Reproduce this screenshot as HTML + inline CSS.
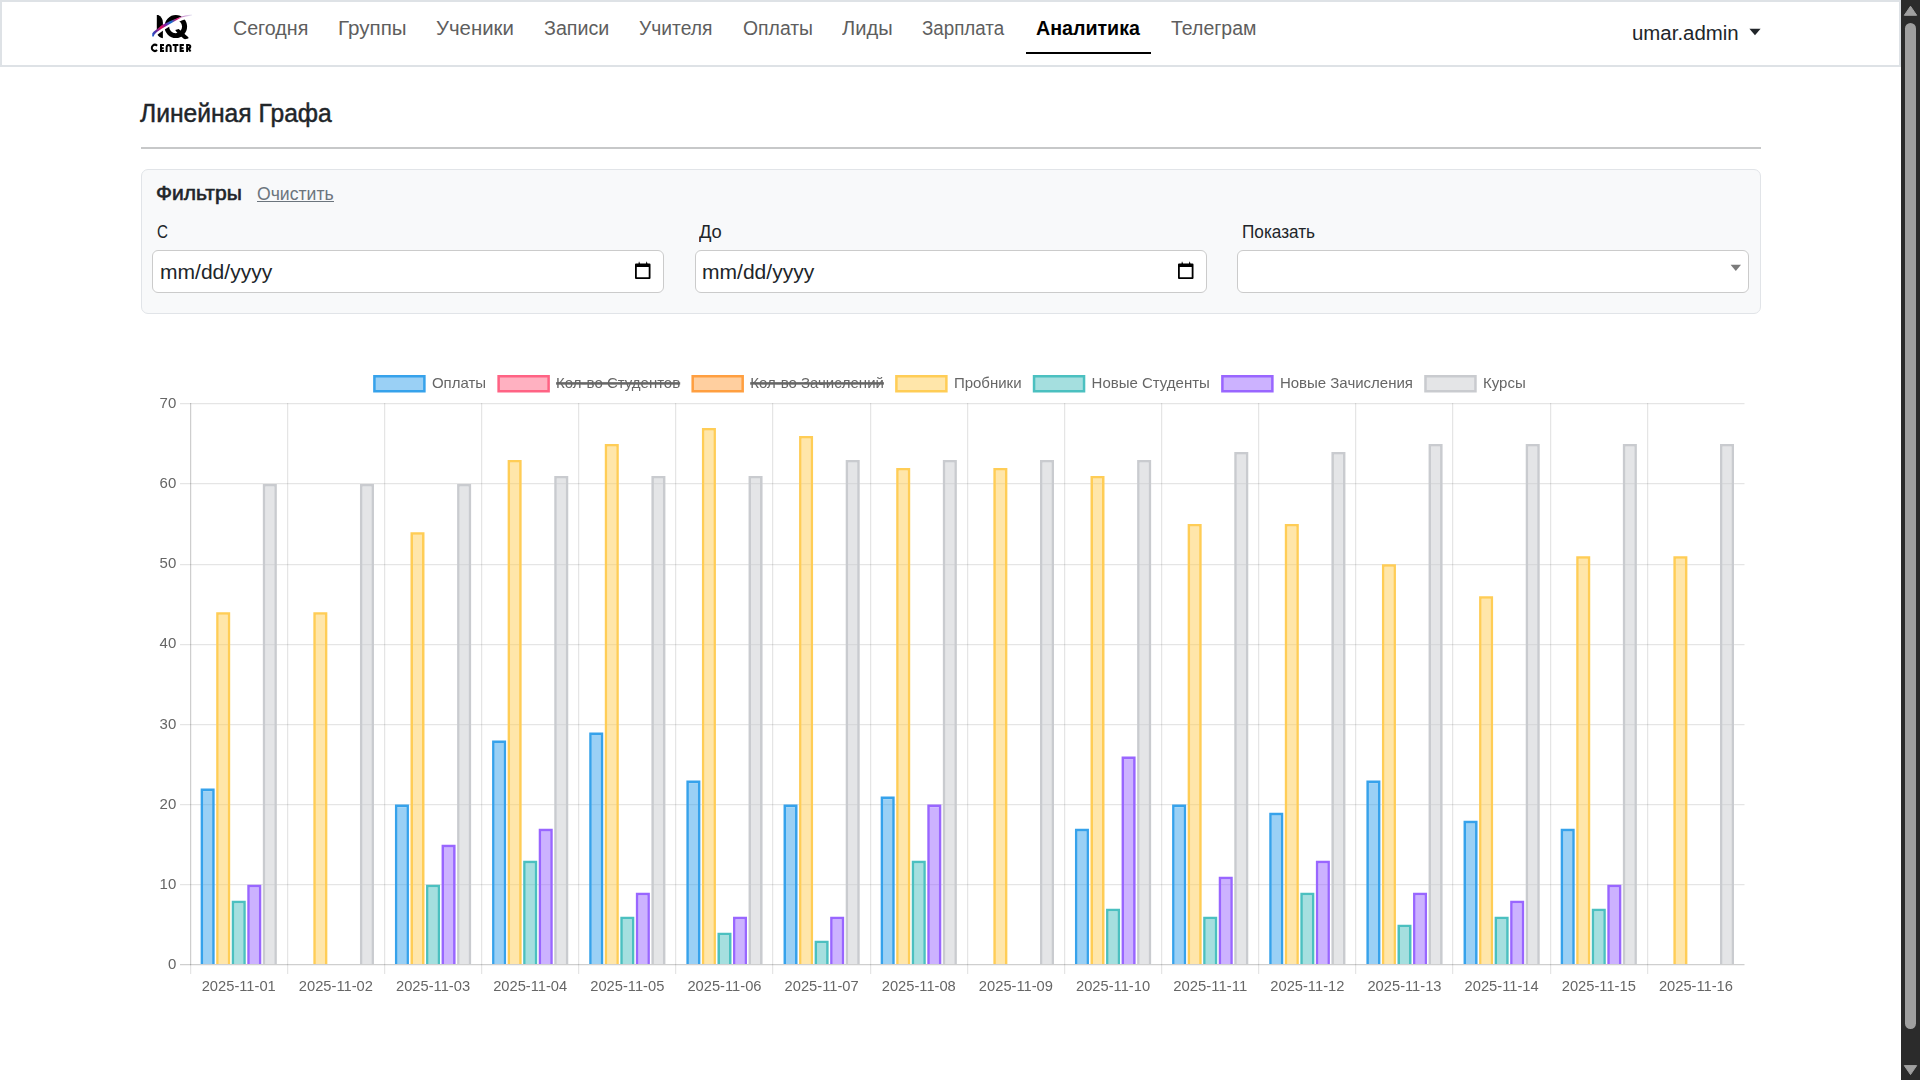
<!DOCTYPE html><html><head><meta charset="utf-8"><title>Аналитика</title><style>
*{box-sizing:border-box;margin:0;padding:0}
html,body{width:1920px;height:1080px;overflow:hidden;background:#fff}
body{position:relative;font-family:"Liberation Sans",sans-serif;color:#212529}
.a{position:absolute;white-space:nowrap}
.nav{position:absolute;left:0;top:0;width:1901px;height:67px;border:2px solid #dee2e6;background:#fff}
.nl{position:absolute;font-size:20px;line-height:20px;color:#5c5c5c;transform-origin:0 0}
.sb{position:absolute;left:1901px;top:0;width:19px;height:1080px;background:#2b2b2b}
.card{position:absolute;left:141px;top:169px;width:1620px;height:145px;background:#f8f9fa;border:1px solid #e1e4e8;border-radius:7px}
.inp{position:absolute;top:250px;height:43px;background:#fff;border:1px solid #cbcbcb;border-radius:6px}
</style></head><body>
<div class="nav"></div>
<svg class="a" style="left:144px;top:10px" width="56" height="48" viewBox="144 10 56 48">
<defs><linearGradient id="sw" x1="152" y1="36" x2="192" y2="15" gradientUnits="userSpaceOnUse">
<stop offset="0" stop-color="#1a5fd0"/><stop offset="0.13" stop-color="#5a2aa0"/><stop offset="0.27" stop-color="#e2105a"/>
<stop offset="0.38" stop-color="#7a20a8"/><stop offset="0.52" stop-color="#1070d0"/><stop offset="0.66" stop-color="#e01070"/>
<stop offset="0.8" stop-color="#c890d0"/><stop offset="1" stop-color="#e8e8f4"/></linearGradient></defs>
<path d="M156.8 15 L158.3 15 C161 16.5 162.9 19 162.9 22.5 L162.9 38.3 C160.5 37.8 158.3 36.5 157.2 34.2 L156.8 33 Z" fill="#000"/>
<path fill-rule="evenodd" fill="#000" d="M164.5 26.6 A11.3 11.5 0 1 1 187.1 26.6 A11.3 11.5 0 1 1 164.5 26.6 Z M169.1 26.6 A6.5 6.65 0 1 0 182.1 26.6 A6.5 6.65 0 1 0 169.1 26.6 Z"/>
<path fill="#000" d="M175.2 30.0 L178.7 28.9 L188.4 37.2 Q188.6 38.3 188.1 38.6 L185 39.3 Q183.3 38.8 182 37.3 L177.2 32.8 Z"/>
<path d="M153.2 36.2 C158 31.6 167 25.4 175.9 21.1 C179.5 19.3 183 17.9 188 16.6" fill="none" stroke="#fff" stroke-width="3.4"/>
<path fill="url(#sw)" d="M152.3 33.2 L153.8 31.6 L156.9 29.2 L162 25.05 L170.3 20.9 L175.9 18.7 L181.4 16.4 L186 15.3 L192 14.5 L192 15.4 L186 16.5 L181.4 17.6 L175.9 20.6 L170.3 23.7 L162 28.4 L156.9 32.0 L154.5 34.6 L153.6 36.4 L152.8 36.8 L152.2 36.0 Z"/>
<path fill="none" stroke="#000" stroke-width="2" d="M157.1 45.74 A3.1 3.05 0 1 0 157.1 50.06 M164.05 44.95 H161 V51 H164.05 M161 48.25 H163.7 M166.6 52 V47.5 A2.05 2.55 0 0 1 170.7 47.5 V52 M172.7 44.95 H178.4 M175.55 44.95 V52 M183.9 44.95 H180.6 V51 H183.9 M180.6 48.25 H183.5 M187.1 52 V44.95 H188.4 A1.9 1.75 0 0 1 188.4 48.45 H187.1 M188.6 48.4 L190.5 51.6"/>
</svg>
<div class="a" style="left:232.52px;top:18.07px;font-size:20px;line-height:20px;height:20px;color:#5e5e5e;transform:scaleX(0.9824);transform-origin:0 0;">Сегодня</div>
<div class="a" style="left:337.72px;top:18.07px;font-size:20px;line-height:20px;height:20px;color:#5e5e5e;transform:scaleX(1.0293);transform-origin:0 0;">Группы</div>
<div class="a" style="left:436.40px;top:18.07px;font-size:20px;line-height:20px;height:20px;color:#5e5e5e;transform:scaleX(1.0184);transform-origin:0 0;">Ученики</div>
<div class="a" style="left:544.20px;top:18.07px;font-size:20px;line-height:20px;height:20px;color:#5e5e5e;transform:scaleX(0.9831);transform-origin:0 0;">Записи</div>
<div class="a" style="left:638.75px;top:18.07px;font-size:20px;line-height:20px;height:20px;color:#5e5e5e;transform:scaleX(0.9640);transform-origin:0 0;">Учителя</div>
<div class="a" style="left:742.70px;top:18.07px;font-size:20px;line-height:20px;height:20px;color:#5e5e5e;transform:scaleX(0.9690);transform-origin:0 0;">Оплаты</div>
<div class="a" style="left:841.90px;top:18.07px;font-size:20px;line-height:20px;height:20px;color:#5e5e5e;transform:scaleX(1.0048);transform-origin:0 0;">Лиды</div>
<div class="a" style="left:922.30px;top:18.07px;font-size:20px;line-height:20px;height:20px;color:#5e5e5e;transform:scaleX(0.9373);transform-origin:0 0;">Зарплата</div>
<div class="a" style="left:1035.60px;top:18.07px;font-size:20px;line-height:20px;height:20px;color:#000;font-weight:bold;transform:scaleX(0.9818);transform-origin:0 0;">Аналитика</div>
<div class="a" style="left:1171.00px;top:18.07px;font-size:20px;line-height:20px;height:20px;color:#5e5e5e;transform:scaleX(0.9748);transform-origin:0 0;">Телеграм</div>
<div class="a" style="left:1026px;top:52px;width:125px;height:2px;background:#000"></div>
<div class="a" style="left:1631.98px;top:23.07px;font-size:20px;line-height:20px;height:20px;color:#212529;transform:scaleX(1.0208);transform-origin:0 0;">umar.admin</div>
<svg class="a" style="left:1749px;top:28px" width="12" height="8"><path d="M0.4 0.8 L11.6 0.8 L6 7.2 Z" fill="#212529"/></svg>
<div class="a" style="left:140.30px;top:100.74px;font-size:25px;line-height:25px;height:25px;color:#212529;transform:scaleX(0.9854);transform-origin:0 0;-webkit-text-stroke:0.45px #212529;">Линейная Графа</div>
<div class="a" style="left:141px;top:147px;width:1620px;height:2px;background:#c7c8c9"></div>
<div class="card"></div>
<div class="a" style="left:155.75px;top:182.87px;font-size:20px;line-height:20px;height:20px;color:#212529;transform:scaleX(1.0519);transform-origin:0 0;-webkit-text-stroke:0.6px #212529;">Фильтры</div>
<div class="a" style="left:256.80px;top:185.59px;font-size:17.5px;line-height:17.5px;height:17.5px;color:#6c757d;transform:scaleX(1.0058);transform-origin:0 0;">Очистить</div>
<div class="a" style="left:257px;top:201px;width:77px;height:1.3px;background:#6c757d"></div>
<div class="a" style="left:156.80px;top:223.89px;font-size:17.5px;line-height:17.5px;height:17.5px;color:#212529;transform:scaleX(0.8667);transform-origin:0 0;">С</div>
<div class="a" style="left:699.20px;top:223.89px;font-size:17.5px;line-height:17.5px;height:17.5px;color:#212529;transform:scaleX(1.0476);transform-origin:0 0;">До</div>
<div class="a" style="left:1241.52px;top:224.09px;font-size:17.5px;line-height:17.5px;height:17.5px;color:#212529;transform:scaleX(0.9812);transform-origin:0 0;">Показать</div>
<div class="inp" style="left:152px;width:512px"></div>
<div class="a" style="left:159.95px;top:262.07px;font-size:20px;line-height:20px;height:20px;color:#212529;transform:scaleX(1.0522);transform-origin:0 0;">mm/dd/yyyy</div>
<svg class="a" style="left:634px;top:260px" width="18" height="20" viewBox="0 0 18 20">
<path d="M1 4.5 Q1 3.5 2 3.5 L4.5 3.5 L5 1.2 L6 3.5 L12 3.5 L12.6 1.2 L13.5 3.5 L15.5 3.5 Q16.5 3.5 16.5 4.5 L16.5 18 Q16.5 19 15.5 19 L2 19 Q1 19 1 18 Z M2.8 7 L2.8 17.2 L14.7 17.2 L14.7 7 Z" fill="#000" fill-rule="evenodd"/></svg>
<div class="inp" style="left:694.5px;width:512.0px"></div>
<div class="a" style="left:702.45px;top:262.07px;font-size:20px;line-height:20px;height:20px;color:#212529;transform:scaleX(1.0522);transform-origin:0 0;">mm/dd/yyyy</div>
<svg class="a" style="left:1176.5px;top:260px" width="18" height="20" viewBox="0 0 18 20">
<path d="M1 4.5 Q1 3.5 2 3.5 L4.5 3.5 L5 1.2 L6 3.5 L12 3.5 L12.6 1.2 L13.5 3.5 L15.5 3.5 Q16.5 3.5 16.5 4.5 L16.5 18 Q16.5 19 15.5 19 L2 19 Q1 19 1 18 Z M2.8 7 L2.8 17.2 L14.7 17.2 L14.7 7 Z" fill="#000" fill-rule="evenodd"/></svg>
<div class="inp" style="left:1237px;width:512px"></div>
<svg class="a" style="left:1730px;top:264px" width="12" height="8"><path d="M0.6 0.7 L11 0.7 L5.8 7 Z" fill="#7b7b7b"/></svg>
<svg class="a" style="left:0;top:340px;will-change:transform" width="1900" height="700" viewBox="0 340 1900 700" font-family="Liberation Sans" font-size="15">
<text x="176.3" y="969.00" text-anchor="end" fill="#666" font-size="15.5" textLength="8.34" lengthAdjust="spacingAndGlyphs">0</text>
<rect x="180" y="884" width="1564.50" height="1.25" fill="rgba(0,0,0,0.1)"/>
<text x="176.3" y="888.86" text-anchor="end" fill="#666" font-size="15.5" textLength="16.68" lengthAdjust="spacingAndGlyphs">10</text>
<rect x="180" y="804" width="1564.50" height="1.25" fill="rgba(0,0,0,0.1)"/>
<text x="176.3" y="808.72" text-anchor="end" fill="#666" font-size="15.5" textLength="16.68" lengthAdjust="spacingAndGlyphs">20</text>
<rect x="180" y="724" width="1564.50" height="1.25" fill="rgba(0,0,0,0.1)"/>
<text x="176.3" y="728.57" text-anchor="end" fill="#666" font-size="15.5" textLength="16.68" lengthAdjust="spacingAndGlyphs">30</text>
<rect x="180" y="644" width="1564.50" height="1.25" fill="rgba(0,0,0,0.1)"/>
<text x="176.3" y="648.43" text-anchor="end" fill="#666" font-size="15.5" textLength="16.68" lengthAdjust="spacingAndGlyphs">40</text>
<rect x="180" y="564" width="1564.50" height="1.25" fill="rgba(0,0,0,0.1)"/>
<text x="176.3" y="568.29" text-anchor="end" fill="#666" font-size="15.5" textLength="16.68" lengthAdjust="spacingAndGlyphs">50</text>
<rect x="180" y="483" width="1564.50" height="1.25" fill="rgba(0,0,0,0.1)"/>
<text x="176.3" y="488.14" text-anchor="end" fill="#666" font-size="15.5" textLength="16.68" lengthAdjust="spacingAndGlyphs">60</text>
<rect x="180" y="403" width="1564.50" height="1.25" fill="rgba(0,0,0,0.1)"/>
<text x="176.3" y="408.00" text-anchor="end" fill="#666" font-size="15.5" textLength="16.68" lengthAdjust="spacingAndGlyphs">70</text>
<rect x="190" y="403" width="1.25" height="571" fill="rgba(0,0,0,0.1)"/>
<rect x="287" y="403" width="1.25" height="571" fill="rgba(0,0,0,0.1)"/>
<rect x="384" y="403" width="1.25" height="571" fill="rgba(0,0,0,0.1)"/>
<rect x="481" y="403" width="1.25" height="571" fill="rgba(0,0,0,0.1)"/>
<rect x="578" y="403" width="1.25" height="571" fill="rgba(0,0,0,0.1)"/>
<rect x="675" y="403" width="1.25" height="571" fill="rgba(0,0,0,0.1)"/>
<rect x="772" y="403" width="1.25" height="571" fill="rgba(0,0,0,0.1)"/>
<rect x="870" y="403" width="1.25" height="571" fill="rgba(0,0,0,0.1)"/>
<rect x="967" y="403" width="1.25" height="571" fill="rgba(0,0,0,0.1)"/>
<rect x="1064" y="403" width="1.25" height="571" fill="rgba(0,0,0,0.1)"/>
<rect x="1161" y="403" width="1.25" height="571" fill="rgba(0,0,0,0.1)"/>
<rect x="1258" y="403" width="1.25" height="571" fill="rgba(0,0,0,0.1)"/>
<rect x="1355" y="403" width="1.25" height="571" fill="rgba(0,0,0,0.1)"/>
<rect x="1452" y="403" width="1.25" height="571" fill="rgba(0,0,0,0.1)"/>
<rect x="1550" y="403" width="1.25" height="571" fill="rgba(0,0,0,0.1)"/>
<rect x="1647" y="403" width="1.25" height="571" fill="rgba(0,0,0,0.1)"/>
<rect x="190" y="403" width="1.25" height="562.25" fill="rgba(0,0,0,0.1)"/>
<text x="238.74" y="991" text-anchor="middle" fill="#666" font-size="15.5" textLength="74.1" lengthAdjust="spacingAndGlyphs">2025-11-01</text>
<text x="335.89" y="991" text-anchor="middle" fill="#666" font-size="15.5" textLength="74.1" lengthAdjust="spacingAndGlyphs">2025-11-02</text>
<text x="433.03" y="991" text-anchor="middle" fill="#666" font-size="15.5" textLength="74.1" lengthAdjust="spacingAndGlyphs">2025-11-03</text>
<text x="530.18" y="991" text-anchor="middle" fill="#666" font-size="15.5" textLength="74.1" lengthAdjust="spacingAndGlyphs">2025-11-04</text>
<text x="627.33" y="991" text-anchor="middle" fill="#666" font-size="15.5" textLength="74.1" lengthAdjust="spacingAndGlyphs">2025-11-05</text>
<text x="724.47" y="991" text-anchor="middle" fill="#666" font-size="15.5" textLength="74.1" lengthAdjust="spacingAndGlyphs">2025-11-06</text>
<text x="821.62" y="991" text-anchor="middle" fill="#666" font-size="15.5" textLength="74.1" lengthAdjust="spacingAndGlyphs">2025-11-07</text>
<text x="918.76" y="991" text-anchor="middle" fill="#666" font-size="15.5" textLength="74.1" lengthAdjust="spacingAndGlyphs">2025-11-08</text>
<text x="1015.91" y="991" text-anchor="middle" fill="#666" font-size="15.5" textLength="74.1" lengthAdjust="spacingAndGlyphs">2025-11-09</text>
<text x="1113.05" y="991" text-anchor="middle" fill="#666" font-size="15.5" textLength="74.1" lengthAdjust="spacingAndGlyphs">2025-11-10</text>
<text x="1210.20" y="991" text-anchor="middle" fill="#666" font-size="15.5" textLength="74.1" lengthAdjust="spacingAndGlyphs">2025-11-11</text>
<text x="1307.34" y="991" text-anchor="middle" fill="#666" font-size="15.5" textLength="74.1" lengthAdjust="spacingAndGlyphs">2025-11-12</text>
<text x="1404.49" y="991" text-anchor="middle" fill="#666" font-size="15.5" textLength="74.1" lengthAdjust="spacingAndGlyphs">2025-11-13</text>
<text x="1501.64" y="991" text-anchor="middle" fill="#666" font-size="15.5" textLength="74.1" lengthAdjust="spacingAndGlyphs">2025-11-14</text>
<text x="1598.78" y="991" text-anchor="middle" fill="#666" font-size="15.5" textLength="74.1" lengthAdjust="spacingAndGlyphs">2025-11-15</text>
<text x="1695.93" y="991" text-anchor="middle" fill="#666" font-size="15.5" textLength="74.1" lengthAdjust="spacingAndGlyphs">2025-11-16</text>
<path fill-rule="evenodd" fill="rgb(54,162,235)" d="M200.66 788.59H214.65V964.00H200.66Z M203.16 791.09V964.00H212.15V791.09Z"/>
<rect x="203.16" y="791.09" width="8.99" height="172.91" fill="rgba(54,162,235,0.5)"/>
<path fill-rule="evenodd" fill="rgb(255,205,86)" d="M216.21 612.27H230.19V964.00H216.21Z M218.71 614.77V964.00H227.69V614.77Z"/>
<rect x="218.71" y="614.77" width="8.99" height="349.23" fill="rgba(255,205,86,0.5)"/>
<path fill-rule="evenodd" fill="rgb(75,192,192)" d="M231.75 900.79H245.74V964.00H231.75Z M234.25 903.29V964.00H243.24V903.29Z"/>
<rect x="234.25" y="903.29" width="8.99" height="60.71" fill="rgba(75,192,192,0.5)"/>
<path fill-rule="evenodd" fill="rgb(153,102,255)" d="M247.29 884.76H261.28V964.00H247.29Z M249.79 887.26V964.00H258.78V887.26Z"/>
<rect x="249.79" y="887.26" width="8.99" height="76.74" fill="rgba(153,102,255,0.5)"/>
<path fill-rule="evenodd" fill="rgb(201,203,207)" d="M262.83 484.04H276.82V964.00H262.83Z M265.33 486.54V964.00H274.32V486.54Z"/>
<rect x="265.33" y="486.54" width="8.99" height="477.46" fill="rgba(201,203,207,0.5)"/>
<path fill-rule="evenodd" fill="rgb(255,205,86)" d="M313.35 612.27H327.34V964.00H313.35Z M315.85 614.77V964.00H324.84V614.77Z"/>
<rect x="315.85" y="614.77" width="8.99" height="349.23" fill="rgba(255,205,86,0.5)"/>
<path fill-rule="evenodd" fill="rgb(201,203,207)" d="M359.98 484.04H373.97V964.00H359.98Z M362.48 486.54V964.00H371.47V486.54Z"/>
<rect x="362.48" y="486.54" width="8.99" height="477.46" fill="rgba(201,203,207,0.5)"/>
<path fill-rule="evenodd" fill="rgb(54,162,235)" d="M394.95 804.62H408.94V964.00H394.95Z M397.45 807.12V964.00H406.44V807.12Z"/>
<rect x="397.45" y="807.12" width="8.99" height="156.88" fill="rgba(54,162,235,0.5)"/>
<path fill-rule="evenodd" fill="rgb(255,205,86)" d="M410.50 532.13H424.49V964.00H410.50Z M413.00 534.63V964.00H421.99V534.63Z"/>
<rect x="413.00" y="534.63" width="8.99" height="429.37" fill="rgba(255,205,86,0.5)"/>
<path fill-rule="evenodd" fill="rgb(75,192,192)" d="M426.04 884.76H440.03V964.00H426.04Z M428.54 887.26V964.00H437.53V887.26Z"/>
<rect x="428.54" y="887.26" width="8.99" height="76.74" fill="rgba(75,192,192,0.5)"/>
<path fill-rule="evenodd" fill="rgb(153,102,255)" d="M441.58 844.69H455.57V964.00H441.58Z M444.08 847.19V964.00H453.07V847.19Z"/>
<rect x="444.08" y="847.19" width="8.99" height="116.81" fill="rgba(153,102,255,0.5)"/>
<path fill-rule="evenodd" fill="rgb(201,203,207)" d="M457.13 484.04H471.12V964.00H457.13Z M459.63 486.54V964.00H468.62V486.54Z"/>
<rect x="459.63" y="486.54" width="8.99" height="477.46" fill="rgba(201,203,207,0.5)"/>
<path fill-rule="evenodd" fill="rgb(54,162,235)" d="M492.10 740.50H506.09V964.00H492.10Z M494.60 743.00V964.00H503.59V743.00Z"/>
<rect x="494.60" y="743.00" width="8.99" height="221.00" fill="rgba(54,162,235,0.5)"/>
<path fill-rule="evenodd" fill="rgb(255,205,86)" d="M507.64 460.00H521.63V964.00H507.64Z M510.14 462.50V964.00H519.13V462.50Z"/>
<rect x="510.14" y="462.50" width="8.99" height="501.50" fill="rgba(255,205,86,0.5)"/>
<path fill-rule="evenodd" fill="rgb(75,192,192)" d="M523.19 860.72H537.17V964.00H523.19Z M525.69 863.22V964.00H534.67V863.22Z"/>
<rect x="525.69" y="863.22" width="8.99" height="100.78" fill="rgba(75,192,192,0.5)"/>
<path fill-rule="evenodd" fill="rgb(153,102,255)" d="M538.73 828.66H552.72V964.00H538.73Z M541.23 831.16V964.00H550.22V831.16Z"/>
<rect x="541.23" y="831.16" width="8.99" height="132.84" fill="rgba(153,102,255,0.5)"/>
<path fill-rule="evenodd" fill="rgb(201,203,207)" d="M554.27 476.03H568.26V964.00H554.27Z M556.77 478.53V964.00H565.76V478.53Z"/>
<rect x="556.77" y="478.53" width="8.99" height="485.47" fill="rgba(201,203,207,0.5)"/>
<path fill-rule="evenodd" fill="rgb(54,162,235)" d="M589.24 732.49H603.23V964.00H589.24Z M591.74 734.99V964.00H600.73V734.99Z"/>
<rect x="591.74" y="734.99" width="8.99" height="229.01" fill="rgba(54,162,235,0.5)"/>
<path fill-rule="evenodd" fill="rgb(255,205,86)" d="M604.79 443.97H618.78V964.00H604.79Z M607.29 446.47V964.00H616.28V446.47Z"/>
<rect x="607.29" y="446.47" width="8.99" height="517.53" fill="rgba(255,205,86,0.5)"/>
<path fill-rule="evenodd" fill="rgb(75,192,192)" d="M620.33 916.82H634.32V964.00H620.33Z M622.83 919.32V964.00H631.82V919.32Z"/>
<rect x="622.83" y="919.32" width="8.99" height="44.68" fill="rgba(75,192,192,0.5)"/>
<path fill-rule="evenodd" fill="rgb(153,102,255)" d="M635.87 892.77H649.86V964.00H635.87Z M638.37 895.27V964.00H647.36V895.27Z"/>
<rect x="638.37" y="895.27" width="8.99" height="68.73" fill="rgba(153,102,255,0.5)"/>
<path fill-rule="evenodd" fill="rgb(201,203,207)" d="M651.42 476.03H665.41V964.00H651.42Z M653.92 478.53V964.00H662.91V478.53Z"/>
<rect x="653.92" y="478.53" width="8.99" height="485.47" fill="rgba(201,203,207,0.5)"/>
<path fill-rule="evenodd" fill="rgb(54,162,235)" d="M686.39 780.57H700.38V964.00H686.39Z M688.89 783.07V964.00H697.88V783.07Z"/>
<rect x="688.89" y="783.07" width="8.99" height="180.93" fill="rgba(54,162,235,0.5)"/>
<path fill-rule="evenodd" fill="rgb(255,205,86)" d="M701.93 427.94H715.92V964.00H701.93Z M704.43 430.44V964.00H713.42V430.44Z"/>
<rect x="704.43" y="430.44" width="8.99" height="533.56" fill="rgba(255,205,86,0.5)"/>
<path fill-rule="evenodd" fill="rgb(75,192,192)" d="M717.48 932.84H731.47V964.00H717.48Z M719.98 935.34V964.00H728.97V935.34Z"/>
<rect x="719.98" y="935.34" width="8.99" height="28.66" fill="rgba(75,192,192,0.5)"/>
<path fill-rule="evenodd" fill="rgb(153,102,255)" d="M733.02 916.82H747.01V964.00H733.02Z M735.52 919.32V964.00H744.51V919.32Z"/>
<rect x="735.52" y="919.32" width="8.99" height="44.68" fill="rgba(153,102,255,0.5)"/>
<path fill-rule="evenodd" fill="rgb(201,203,207)" d="M748.56 476.03H762.55V964.00H748.56Z M751.06 478.53V964.00H760.05V478.53Z"/>
<rect x="751.06" y="478.53" width="8.99" height="485.47" fill="rgba(201,203,207,0.5)"/>
<path fill-rule="evenodd" fill="rgb(54,162,235)" d="M783.54 804.62H797.52V964.00H783.54Z M786.04 807.12V964.00H795.02V807.12Z"/>
<rect x="786.04" y="807.12" width="8.99" height="156.88" fill="rgba(54,162,235,0.5)"/>
<path fill-rule="evenodd" fill="rgb(255,205,86)" d="M799.08 435.96H813.07V964.00H799.08Z M801.58 438.46V964.00H810.57V438.46Z"/>
<rect x="801.58" y="438.46" width="8.99" height="525.54" fill="rgba(255,205,86,0.5)"/>
<path fill-rule="evenodd" fill="rgb(75,192,192)" d="M814.62 940.86H828.61V964.00H814.62Z M817.12 943.36V964.00H826.11V943.36Z"/>
<rect x="817.12" y="943.36" width="8.99" height="20.64" fill="rgba(75,192,192,0.5)"/>
<path fill-rule="evenodd" fill="rgb(153,102,255)" d="M830.17 916.82H844.15V964.00H830.17Z M832.67 919.32V964.00H841.65V919.32Z"/>
<rect x="832.67" y="919.32" width="8.99" height="44.68" fill="rgba(153,102,255,0.5)"/>
<path fill-rule="evenodd" fill="rgb(201,203,207)" d="M845.71 460.00H859.70V964.00H845.71Z M848.21 462.50V964.00H857.20V462.50Z"/>
<rect x="848.21" y="462.50" width="8.99" height="501.50" fill="rgba(201,203,207,0.5)"/>
<path fill-rule="evenodd" fill="rgb(54,162,235)" d="M880.68 796.60H894.67V964.00H880.68Z M883.18 799.10V964.00H892.17V799.10Z"/>
<rect x="883.18" y="799.10" width="8.99" height="164.90" fill="rgba(54,162,235,0.5)"/>
<path fill-rule="evenodd" fill="rgb(255,205,86)" d="M896.22 468.01H910.21V964.00H896.22Z M898.72 470.51V964.00H907.71V470.51Z"/>
<rect x="898.72" y="470.51" width="8.99" height="493.49" fill="rgba(255,205,86,0.5)"/>
<path fill-rule="evenodd" fill="rgb(75,192,192)" d="M911.77 860.72H925.76V964.00H911.77Z M914.27 863.22V964.00H923.26V863.22Z"/>
<rect x="914.27" y="863.22" width="8.99" height="100.78" fill="rgba(75,192,192,0.5)"/>
<path fill-rule="evenodd" fill="rgb(153,102,255)" d="M927.31 804.62H941.30V964.00H927.31Z M929.81 807.12V964.00H938.80V807.12Z"/>
<rect x="929.81" y="807.12" width="8.99" height="156.88" fill="rgba(153,102,255,0.5)"/>
<path fill-rule="evenodd" fill="rgb(201,203,207)" d="M942.85 460.00H956.84V964.00H942.85Z M945.35 462.50V964.00H954.34V462.50Z"/>
<rect x="945.35" y="462.50" width="8.99" height="501.50" fill="rgba(201,203,207,0.5)"/>
<path fill-rule="evenodd" fill="rgb(255,205,86)" d="M993.37 468.01H1007.36V964.00H993.37Z M995.87 470.51V964.00H1004.86V470.51Z"/>
<rect x="995.87" y="470.51" width="8.99" height="493.49" fill="rgba(255,205,86,0.5)"/>
<path fill-rule="evenodd" fill="rgb(201,203,207)" d="M1040.00 460.00H1053.99V964.00H1040.00Z M1042.50 462.50V964.00H1051.49V462.50Z"/>
<rect x="1042.50" y="462.50" width="8.99" height="501.50" fill="rgba(201,203,207,0.5)"/>
<path fill-rule="evenodd" fill="rgb(54,162,235)" d="M1074.97 828.66H1088.96V964.00H1074.97Z M1077.47 831.16V964.00H1086.46V831.16Z"/>
<rect x="1077.47" y="831.16" width="8.99" height="132.84" fill="rgba(54,162,235,0.5)"/>
<path fill-rule="evenodd" fill="rgb(255,205,86)" d="M1090.52 476.03H1104.50V964.00H1090.52Z M1093.02 478.53V964.00H1102.00V478.53Z"/>
<rect x="1093.02" y="478.53" width="8.99" height="485.47" fill="rgba(255,205,86,0.5)"/>
<path fill-rule="evenodd" fill="rgb(75,192,192)" d="M1106.06 908.80H1120.05V964.00H1106.06Z M1108.56 911.30V964.00H1117.55V911.30Z"/>
<rect x="1108.56" y="911.30" width="8.99" height="52.70" fill="rgba(75,192,192,0.5)"/>
<path fill-rule="evenodd" fill="rgb(153,102,255)" d="M1121.60 756.53H1135.59V964.00H1121.60Z M1124.10 759.03V964.00H1133.09V759.03Z"/>
<rect x="1124.10" y="759.03" width="8.99" height="204.97" fill="rgba(153,102,255,0.5)"/>
<path fill-rule="evenodd" fill="rgb(201,203,207)" d="M1137.15 460.00H1151.13V964.00H1137.15Z M1139.65 462.50V964.00H1148.63V462.50Z"/>
<rect x="1139.65" y="462.50" width="8.99" height="501.50" fill="rgba(201,203,207,0.5)"/>
<path fill-rule="evenodd" fill="rgb(54,162,235)" d="M1172.12 804.62H1186.11V964.00H1172.12Z M1174.62 807.12V964.00H1183.61V807.12Z"/>
<rect x="1174.62" y="807.12" width="8.99" height="156.88" fill="rgba(54,162,235,0.5)"/>
<path fill-rule="evenodd" fill="rgb(255,205,86)" d="M1187.66 524.11H1201.65V964.00H1187.66Z M1190.16 526.61V964.00H1199.15V526.61Z"/>
<rect x="1190.16" y="526.61" width="8.99" height="437.39" fill="rgba(255,205,86,0.5)"/>
<path fill-rule="evenodd" fill="rgb(75,192,192)" d="M1203.20 916.82H1217.19V964.00H1203.20Z M1205.70 919.32V964.00H1214.69V919.32Z"/>
<rect x="1205.70" y="919.32" width="8.99" height="44.68" fill="rgba(75,192,192,0.5)"/>
<path fill-rule="evenodd" fill="rgb(153,102,255)" d="M1218.75 876.74H1232.74V964.00H1218.75Z M1221.25 879.24V964.00H1230.24V879.24Z"/>
<rect x="1221.25" y="879.24" width="8.99" height="84.76" fill="rgba(153,102,255,0.5)"/>
<path fill-rule="evenodd" fill="rgb(201,203,207)" d="M1234.29 451.99H1248.28V964.00H1234.29Z M1236.79 454.49V964.00H1245.78V454.49Z"/>
<rect x="1236.79" y="454.49" width="8.99" height="509.51" fill="rgba(201,203,207,0.5)"/>
<path fill-rule="evenodd" fill="rgb(54,162,235)" d="M1269.26 812.63H1283.25V964.00H1269.26Z M1271.76 815.13V964.00H1280.75V815.13Z"/>
<rect x="1271.76" y="815.13" width="8.99" height="148.87" fill="rgba(54,162,235,0.5)"/>
<path fill-rule="evenodd" fill="rgb(255,205,86)" d="M1284.81 524.11H1298.80V964.00H1284.81Z M1287.31 526.61V964.00H1296.30V526.61Z"/>
<rect x="1287.31" y="526.61" width="8.99" height="437.39" fill="rgba(255,205,86,0.5)"/>
<path fill-rule="evenodd" fill="rgb(75,192,192)" d="M1300.35 892.77H1314.34V964.00H1300.35Z M1302.85 895.27V964.00H1311.84V895.27Z"/>
<rect x="1302.85" y="895.27" width="8.99" height="68.73" fill="rgba(75,192,192,0.5)"/>
<path fill-rule="evenodd" fill="rgb(153,102,255)" d="M1315.89 860.72H1329.88V964.00H1315.89Z M1318.39 863.22V964.00H1327.38V863.22Z"/>
<rect x="1318.39" y="863.22" width="8.99" height="100.78" fill="rgba(153,102,255,0.5)"/>
<path fill-rule="evenodd" fill="rgb(201,203,207)" d="M1331.44 451.99H1345.43V964.00H1331.44Z M1333.94 454.49V964.00H1342.93V454.49Z"/>
<rect x="1333.94" y="454.49" width="8.99" height="509.51" fill="rgba(201,203,207,0.5)"/>
<path fill-rule="evenodd" fill="rgb(54,162,235)" d="M1366.41 780.57H1380.40V964.00H1366.41Z M1368.91 783.07V964.00H1377.90V783.07Z"/>
<rect x="1368.91" y="783.07" width="8.99" height="180.93" fill="rgba(54,162,235,0.5)"/>
<path fill-rule="evenodd" fill="rgb(255,205,86)" d="M1381.95 564.19H1395.94V964.00H1381.95Z M1384.45 566.69V964.00H1393.44V566.69Z"/>
<rect x="1384.45" y="566.69" width="8.99" height="397.31" fill="rgba(255,205,86,0.5)"/>
<path fill-rule="evenodd" fill="rgb(75,192,192)" d="M1397.50 924.83H1411.48V964.00H1397.50Z M1400.00 927.33V964.00H1408.98V927.33Z"/>
<rect x="1400.00" y="927.33" width="8.99" height="36.67" fill="rgba(75,192,192,0.5)"/>
<path fill-rule="evenodd" fill="rgb(153,102,255)" d="M1413.04 892.77H1427.03V964.00H1413.04Z M1415.54 895.27V964.00H1424.53V895.27Z"/>
<rect x="1415.54" y="895.27" width="8.99" height="68.73" fill="rgba(153,102,255,0.5)"/>
<path fill-rule="evenodd" fill="rgb(201,203,207)" d="M1428.58 443.97H1442.57V964.00H1428.58Z M1431.08 446.47V964.00H1440.07V446.47Z"/>
<rect x="1431.08" y="446.47" width="8.99" height="517.53" fill="rgba(201,203,207,0.5)"/>
<path fill-rule="evenodd" fill="rgb(54,162,235)" d="M1463.55 820.64H1477.54V964.00H1463.55Z M1466.05 823.14V964.00H1475.04V823.14Z"/>
<rect x="1466.05" y="823.14" width="8.99" height="140.86" fill="rgba(54,162,235,0.5)"/>
<path fill-rule="evenodd" fill="rgb(255,205,86)" d="M1479.10 596.24H1493.09V964.00H1479.10Z M1481.60 598.74V964.00H1490.59V598.74Z"/>
<rect x="1481.60" y="598.74" width="8.99" height="365.26" fill="rgba(255,205,86,0.5)"/>
<path fill-rule="evenodd" fill="rgb(75,192,192)" d="M1494.64 916.82H1508.63V964.00H1494.64Z M1497.14 919.32V964.00H1506.13V919.32Z"/>
<rect x="1497.14" y="919.32" width="8.99" height="44.68" fill="rgba(75,192,192,0.5)"/>
<path fill-rule="evenodd" fill="rgb(153,102,255)" d="M1510.18 900.79H1524.17V964.00H1510.18Z M1512.68 903.29V964.00H1521.67V903.29Z"/>
<rect x="1512.68" y="903.29" width="8.99" height="60.71" fill="rgba(153,102,255,0.5)"/>
<path fill-rule="evenodd" fill="rgb(201,203,207)" d="M1525.73 443.97H1539.72V964.00H1525.73Z M1528.23 446.47V964.00H1537.22V446.47Z"/>
<rect x="1528.23" y="446.47" width="8.99" height="517.53" fill="rgba(201,203,207,0.5)"/>
<path fill-rule="evenodd" fill="rgb(54,162,235)" d="M1560.70 828.66H1574.69V964.00H1560.70Z M1563.20 831.16V964.00H1572.19V831.16Z"/>
<rect x="1563.20" y="831.16" width="8.99" height="132.84" fill="rgba(54,162,235,0.5)"/>
<path fill-rule="evenodd" fill="rgb(255,205,86)" d="M1576.24 556.17H1590.23V964.00H1576.24Z M1578.74 558.67V964.00H1587.73V558.67Z"/>
<rect x="1578.74" y="558.67" width="8.99" height="405.33" fill="rgba(255,205,86,0.5)"/>
<path fill-rule="evenodd" fill="rgb(75,192,192)" d="M1591.79 908.80H1605.78V964.00H1591.79Z M1594.29 911.30V964.00H1603.28V911.30Z"/>
<rect x="1594.29" y="911.30" width="8.99" height="52.70" fill="rgba(75,192,192,0.5)"/>
<path fill-rule="evenodd" fill="rgb(153,102,255)" d="M1607.33 884.76H1621.32V964.00H1607.33Z M1609.83 887.26V964.00H1618.82V887.26Z"/>
<rect x="1609.83" y="887.26" width="8.99" height="76.74" fill="rgba(153,102,255,0.5)"/>
<path fill-rule="evenodd" fill="rgb(201,203,207)" d="M1622.87 443.97H1636.86V964.00H1622.87Z M1625.37 446.47V964.00H1634.36V446.47Z"/>
<rect x="1625.37" y="446.47" width="8.99" height="517.53" fill="rgba(201,203,207,0.5)"/>
<path fill-rule="evenodd" fill="rgb(255,205,86)" d="M1673.39 556.17H1687.38V964.00H1673.39Z M1675.89 558.67V964.00H1684.88V558.67Z"/>
<rect x="1675.89" y="558.67" width="8.99" height="405.33" fill="rgba(255,205,86,0.5)"/>
<path fill-rule="evenodd" fill="rgb(201,203,207)" d="M1720.02 443.97H1734.01V964.00H1720.02Z M1722.52 446.47V964.00H1731.51V446.47Z"/>
<rect x="1722.52" y="446.47" width="8.99" height="517.53" fill="rgba(201,203,207,0.5)"/>
<rect x="180" y="964" width="1564.50" height="1.25" fill="rgba(0,0,0,0.19)"/>
<rect x="374.40" y="376.25" width="50" height="15" fill="rgba(54,162,235,0.5)" stroke="rgb(54,162,235)" stroke-width="2.5"/>
<text x="431.90" y="387.8" fill="#666">Оплаты</text>
<rect x="498.61" y="376.25" width="50" height="15" fill="rgba(255,99,132,0.5)" stroke="rgb(255,99,132)" stroke-width="2.5"/>
<text x="556.11" y="387.8" fill="#666">Кол-во Студентов</text>
<rect x="556.11" y="382.15" width="124.07" height="2.5" fill="#666"/>
<rect x="692.68" y="376.25" width="50" height="15" fill="rgba(255,159,64,0.5)" stroke="rgb(255,159,64)" stroke-width="2.5"/>
<text x="750.18" y="387.8" fill="#666">Кол-во Зачислений</text>
<rect x="750.18" y="382.15" width="133.71" height="2.5" fill="#666"/>
<rect x="896.39" y="376.25" width="50" height="15" fill="rgba(255,205,86,0.5)" stroke="rgb(255,205,86)" stroke-width="2.5"/>
<text x="953.89" y="387.8" fill="#666">Пробники</text>
<rect x="1034.05" y="376.25" width="50" height="15" fill="rgba(75,192,192,0.5)" stroke="rgb(75,192,192)" stroke-width="2.5"/>
<text x="1091.55" y="387.8" fill="#666">Новые Студенты</text>
<rect x="1222.39" y="376.25" width="50" height="15" fill="rgba(153,102,255,0.5)" stroke="rgb(153,102,255)" stroke-width="2.5"/>
<text x="1279.89" y="387.8" fill="#666">Новые Зачисления</text>
<rect x="1425.47" y="376.25" width="50" height="15" fill="rgba(201,203,207,0.5)" stroke="rgb(201,203,207)" stroke-width="2.5"/>
<text x="1482.97" y="387.8" fill="#666">Курсы</text>
</svg>
<div class="sb"></div>
<svg class="a" style="left:1901px;top:0" width="19" height="1080"><path d="M3.3 15.3 L9.5 6.2 L15.7 15.3 Z" fill="#a0a0a0" stroke="#a0a0a0" stroke-width="1" stroke-linejoin="round"/><rect x="4" y="23" width="11" height="1006" rx="5.5" fill="#9f9f9f"/><path d="M3.3 1065.6 L9.5 1074.6 L15.7 1065.6 Z" fill="#a0a0a0" stroke="#a0a0a0" stroke-width="1" stroke-linejoin="round"/></svg>
</body></html>
